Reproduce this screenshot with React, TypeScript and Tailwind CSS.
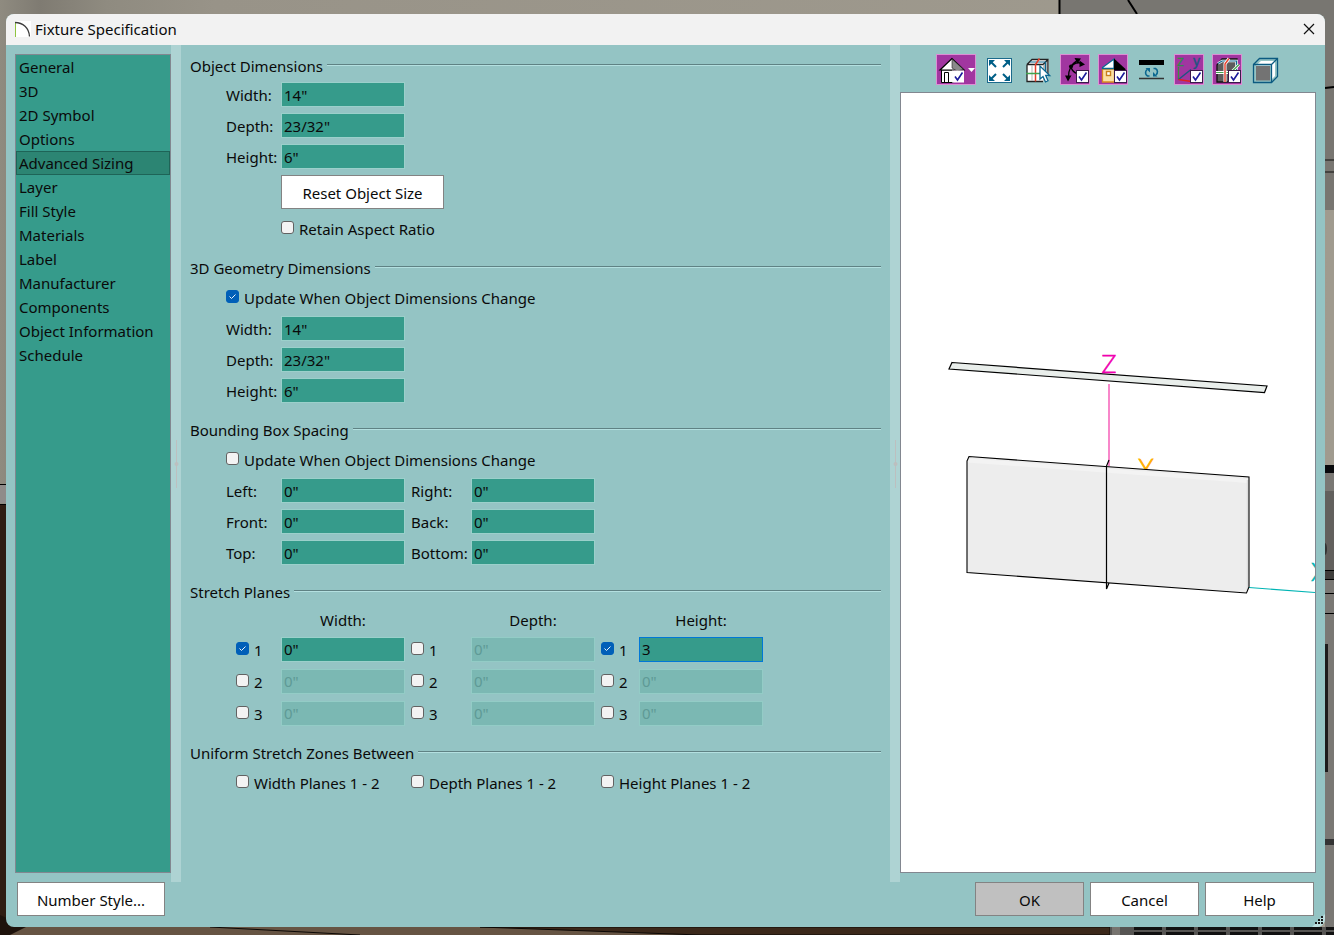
import { useState } from "react";
import type { ReactNode } from "react";

const PAGES = [
  "General",
  "3D",
  "2D Symbol",
  "Options",
  "Advanced Sizing",
  "Layer",
  "Fill Style",
  "Materials",
  "Label",
  "Manufacturer",
  "Components",
  "Object Information",
  "Schedule",
];

function Backdrop() {
  return (
    <svg
      className="absolute inset-0 h-full w-full"
      viewBox="0 0 1334 935"
      preserveAspectRatio="none"
      aria-hidden
    >
      <defs>
        <linearGradient id="wall" x1="0" x2="1" y1="0" y2="0">
          <stop offset="0" stopColor="#8f8b80" />
          <stop offset="0.03" stopColor="#7f7b72" />
          <stop offset="0.08" stopColor="#8f8b80" />
          <stop offset="0.16" stopColor="#989388" />
          <stop offset="1" stopColor="#a09b8f" />
        </linearGradient>
      </defs>
      <rect width="1334" height="935" fill="url(#wall)" />
      <rect x="1060" width="274" height="210" fill="#787671" />
      <path d="M1059.500 0v14M1128 0l9 14M1325 88l9-1" stroke="#000" strokeWidth="2" />
      <path d="M1325 160h9M1325 172h9" stroke="#111" />
      <rect y="485" width="6" height="18" fill="#8f8c8a" />
      <path d="M0 484.500h6M0 504.500h6" stroke="#000" />
      <rect y="505" width="6" height="430" fill="#2f1d12" />
      <rect x="1325" y="465" width="9" height="8" fill="#08090c" />
      <rect x="1325" y="473" width="9" height="462" fill="#7a7874" />
      <rect x="1325" y="491" width="9" height="80" fill="#62605d" />
      <ellipse cx="1325" cy="549" rx="2" ry="6" fill="#333" />
      <path d="M1325 570.500h9M1325 579.500h9M1325 593.500h9M1325 613.500h9" stroke="#000" />
      <rect x="1325" y="571" width="9" height="8" fill="#3f3e3c" />
      <rect x="1325" y="644" width="3" height="128" fill="#1c1b1b" />
      <rect x="1325" y="839" width="9" height="6" fill="#333" />
      <rect y="927" width="1110" height="8" fill="#665443" />
      <path d="M0 935V915l26 12-16 8z" fill="#1e120b" />
      <path d="M210 927l150 8M480 927h630v8H700z" stroke="#0c0805" fill="#3b281a" />
      <rect x="1110" y="927" width="224" height="8" fill="#565553" />
      <rect x="1112" y="927" width="8" height="8" fill="#77746f" />
      <path d="M1134 928.500h200M1134 933.500h200" stroke="#111" strokeWidth="3" strokeDasharray="28 4" />
    </svg>
  );
}

interface GroupProps {
  title: string;
  children: ReactNode;
}

function Group({ title, children }: GroupProps) {
  return (
    <section>
      <div className="flex h-[26px] items-center gap-1">
        <h2>{title}</h2>
        <div className="mb-0.5 h-0.5 flex-1 border-t border-b border-t-[#5f8284] border-b-[#b4e0e0]" />
      </div>
      {children}
    </section>
  );
}

interface CheckProps {
  label: string;
  name?: string;
  checked?: boolean;
}

function Check({ label, name, checked = false }: CheckProps) {
  return (
    <label className="flex items-center gap-[5px] pt-0.5 whitespace-nowrap">
      <span className="relative mb-[3px] block h-[13px] w-[13px] shrink-0">
        <input
          type="checkbox"
          aria-label={name}
          defaultChecked={checked}
          className="peer block h-[13px] w-[13px] appearance-none rounded-[3px] border border-[#626262] bg-[#f3f3f3] checked:border-[#005fb8] checked:bg-[#005fb8]"
        />
        <svg
          className="pointer-events-none absolute inset-0 hidden h-[13px] w-[13px] peer-checked:block"
          viewBox="0 0 13 13"
          fill="none"
          stroke="#e8f2fb"
          aria-hidden
        >
          <path d="M3.500 6.500l2 2 4-4" />
        </svg>
      </span>
      <span>{label}</span>
    </label>
  );
}

interface FieldProps {
  name: string;
  value: string;
  id?: string;
  disabled?: boolean;
  active?: boolean;
}

function Field({ name, value, id, disabled, active }: FieldProps) {
  return (
    <input
      type="text"
      id={id}
      aria-label={name}
      defaultValue={value}
      disabled={disabled}
      className={
        "block h-[25px] w-[124px] border px-0.5 outline-none " +
        (disabled
          ? "border-[#93ccc6] bg-[#7bb8b3] text-[#5f9a96]"
          : active
            ? "border-[#0078d7] bg-[#369b8b]"
            : "border-[#9bd0cb] bg-[#369b8b]")
      }
    />
  );
}

function DimensionRow({ label, value, group }: { label: string; value: string; group: string }) {
  const id = group + "-" + label;
  return (
    <div className="flex h-[31px] items-center pl-9">
      <label htmlFor={id} className="w-[55px]">
        {label}:
      </label>
      <Field id={id} name={group + " " + label} value={value} />
    </div>
  );
}

const SPACING = [
  ["Left", "Right"],
  ["Front", "Back"],
  ["Top", "Bottom"],
];

const AXES = ["Width", "Depth", "Height"];

const PLANES = [
  [
    { on: true, value: '0"' },
    { on: false, value: '0"' },
    { on: true, value: "3", active: true },
  ],
  [
    { on: false, value: '0"' },
    { on: false, value: '0"' },
    { on: false, value: '0"' },
  ],
  [
    { on: false, value: '0"' },
    { on: false, value: '0"' },
    { on: false, value: '0"' },
  ],
];

const CHECK_COLS = ["w-[45px]", "w-[60px]", "w-[38px]"];

function SizingForm() {
  return (
    <form className="flex min-w-0 flex-1 flex-col gap-[11px] pt-2 pr-[9px] pl-[9px]">
      <Group title="Object Dimensions">
        <DimensionRow group="Object" label="Width" value={'14"'} />
        <DimensionRow group="Object" label="Depth" value={'23/32"'} />
        <DimensionRow group="Object" label="Height" value={'6"'} />
        <div className="flex h-10 items-center pl-[91px]">
          <button type="button" className="h-[34px] w-[163px] border border-[#838383] bg-white pt-0.5">
            Reset Object Size
          </button>
        </div>
        <div className="flex h-8 items-center pl-[91px]">
          <Check label="Retain Aspect Ratio" />
        </div>
      </Group>

      <Group title="3D Geometry Dimensions">
        <div className="flex h-8 items-center pl-9">
          <Check label="Update When Object Dimensions Change" checked />
        </div>
        <DimensionRow group="Geometry" label="Width" value={'14"'} />
        <DimensionRow group="Geometry" label="Depth" value={'23/32"'} />
        <DimensionRow group="Geometry" label="Height" value={'6"'} />
      </Group>

      <Group title="Bounding Box Spacing">
        <div className="flex h-8 items-center pl-9">
          <Check label="Update When Object Dimensions Change" />
        </div>
        {SPACING.map(([left, right]) => (
          <div key={left} className="flex h-[31px] items-center pl-9">
            <label htmlFor={left} className="w-[55px]">
              {left}:
            </label>
            <Field id={left} name={left} value={'0"'} />
            <label htmlFor={right} className="ml-1.5 w-[60px]">
              {right}:
            </label>
            <Field id={right} name={right} value={'0"'} />
          </div>
        ))}
      </Group>

      <Group title="Stretch Planes">
        <div className="flex h-7 items-center gap-1.5 pt-0.5 pl-[46px] text-center">
          {AXES.map((axis, a) => (
            <div key={axis} className="flex">
              <span className={CHECK_COLS[a]} />
              <span className="w-[124px]">{axis}:</span>
            </div>
          ))}
        </div>
        {PLANES.map((row, r) => (
          <div key={r} className="flex h-8 items-center gap-1.5 pl-[46px]">
            {row.map((plane, a) => (
              <div key={AXES[a]} className="flex items-center">
                <div className={CHECK_COLS[a]}>
                  <Check label={String(r + 1)} name={AXES[a] + " plane " + (r + 1)} checked={plane.on} />
                </div>
                <Field
                  name={AXES[a] + " plane " + (r + 1) + " position"}
                  value={plane.value}
                  disabled={!plane.on}
                  active={"active" in plane}
                />
              </div>
            ))}
          </div>
        ))}
      </Group>

      <Group title="Uniform Stretch Zones Between">
        <div className="flex h-8 items-center pl-[46px]">
          <div className="w-[175px]">
            <Check label="Width Planes 1 - 2" />
          </div>
          <div className="w-[190px]">
            <Check label="Depth Planes 1 - 2" />
          </div>
          <Check label="Height Planes 1 - 2" />
        </div>
      </Group>
    </form>
  );
}

function Splitter() {
  return (
    <div className="flex w-2.5 shrink-0 items-center justify-center bg-[#aed3d3]">
      <svg className="h-12 w-[5px]" viewBox="0 0 5 48" aria-hidden>
        <path d="M2.500 0v48" stroke="#bdbfbf" />
        <circle cx="2.500" cy="24" r="2" fill="#bdbfbf" />
      </svg>
    </div>
  );
}

function TickBox() {
  return (
    <>
      <rect x="16.500" y="16.500" width="12" height="12" fill="#fff" stroke="#3a1a4a" />
      <path d="M19 22.500l2.500 3.500 5-7.500" fill="none" stroke="#1d1d9c" strokeWidth="1.600" />
    </>
  );
}

interface ToolProps {
  name: string;
  on?: boolean;
  wide?: boolean;
  children: ReactNode;
}

function Tool({ name, on, wide, children }: ToolProps) {
  return (
    <button
      type="button"
      title={name}
      aria-label={name}
      className={
        "h-[31px] shrink-0 " +
        (wide ? "w-10 " : "w-[30px] ") +
        (on ? "bg-[#a136a0] shadow-[inset_0_0_0_1px_#dc8fd4]" : "")
      }
    >
      <svg className="h-[31px] w-full" viewBox={wide ? "0 0 40 31" : "0 0 30 31"} fill="none" aria-hidden>
        {children}
      </svg>
    </button>
  );
}

function Toolbar() {
  return (
    <div className="flex h-[47px] gap-2 pt-[9px] pl-9">
      <Tool name="Render view" on wide>
        <path d="M5.500 16v12.500H17V16z" fill="#fff" stroke="#000" />
        <path d="M16 4.500L4 16h24z" fill="#fff" stroke="#000" strokeWidth="1.200" />
        <path d="M16 5l11.500 10.500L21 17l-5-3z" fill="#8a8a8a" stroke="#222" strokeWidth="0.600" />
        <path d="M8.500 28V18.500h4V28" stroke="#000" />
        <rect x="16" y="16.500" width="12" height="12" fill="#fff" />
        <path d="M19 22.500l2.500 3.500 5-7.500" stroke="#1d1d9c" strokeWidth="1.600" />
        <path d="M32 14h7l-3.500 4z" fill="#fff" />
      </Tool>
      <Tool name="Fill window">
        <rect x="3.500" y="4.500" width="24" height="24" fill="#fff" stroke="#1b6a8c" />
        <g stroke="#005f87" strokeWidth="2">
          <path d="M7 8l5 5M24 8l-5 5M7 25l5-5M24 25l-5-5" />
        </g>
        <path d="M5 6h6l-6 6zM26 6h-6l6 6zM5 27h6l-6-6zM26 27h-6l6-6z" fill="#005f87" />
      </Tool>
      <Tool name="Select object">
        <path d="M5 10.500l5-5h17v16l-6 6H5z" fill="#fff" />
        <path d="M21 10.500l5-5v16l-5 6z" fill="#bbb" />
        <path d="M5 10.500l5-5h16v16M5 10.500h16M5 10.500v17h16M21 10.500l5-5" stroke="#222" strokeWidth="1.300" />
        <path d="M8 8h15.500v15" stroke="#0c6890" strokeWidth="1.200" />
        <path d="M10 11v16" stroke="#b5b5b5" />
        <path d="M17.500 4.500l-4 6v17" stroke="#e6402c" strokeWidth="1.500" />
        <path d="M4 19.500h16" stroke="#3fa34d" strokeWidth="1.300" />
        <path
          d="M18 12v13l3-2.500 2.500 5.500 2.500-1.200-2.300-5.300h4z"
          fill="#fff"
          stroke="#0c6890"
          strokeWidth="1.300"
        />
      </Tool>
      <Tool name="Edit nodes" on>
        <path
          d="M8.500 23c0-7 3-14 9-16.500M11 13c3-4 7-5 11-3.500M11 13c1 4 4 6 7 7"
          stroke="#000"
          strokeWidth="1.300"
        />
        <path d="M8 27.500L5 21.500h6.500zM21 4.500l-6.500-.500 3 5.500zM25 10.500l-5.500-4v6.500z" fill="#000" />
        <circle cx="11" cy="12.500" r="2" fill="#000" />
        <TickBox />
      </Tool>
      <Tool name="Color" on>
        <path d="M4.500 15h12v13h-12z" fill="#fbe0a4" stroke="#d98a1e" strokeWidth="1.300" />
        <path d="M16 5v9.500H4.500v-1z" fill="#fff" stroke="#0c6890" strokeWidth="1.300" />
        <path d="M16 4.500l11.500 10.500V17H16z" fill="#000" />
        <rect x="8.500" y="17.500" width="4" height="4" fill="#fff" stroke="#c9801c" strokeWidth="1.400" />
        <TickBox />
      </Tool>
      <Tool name="Swap planes">
        <rect x="3" y="6" width="25" height="5" fill="#000" />
        <path d="M3 24.500h25" stroke="#333" strokeWidth="1.300" />
        <path d="M13.500 22h-2c-2.500-1.500-2.500-4.500-.500-6.500M17.500 14.500h2c2.500 1.500 2.500 4.500.500 6.500" stroke="#0c6890" strokeWidth="1.600" />
        <path d="M9.500 14h4.500v4.500zM21.500 22.500H17V18z" fill="#0c6890" />
      </Tool>
      <Tool name="Axes" on>
        <path d="M4.500 13v12.500" stroke="#3f8f3f" strokeWidth="1.300" />
        <path d="M4.500 25.500L17 15.500" stroke="#1d5580" strokeWidth="1.500" />
        <path d="M4.500 25.500l13 2" stroke="#e02020" strokeWidth="1.600" />
        <text x="3" y="12" fill="#2f8f45" stroke="#2f8f45" strokeWidth="0.400" className="font-['Liberation_Sans'] text-[11px]">
          Z
        </text>
        <text x="19" y="12" fill="#1d5580" stroke="#1d5580" strokeWidth="0.400" className="font-['Liberation_Sans'] text-[14px]">
          y
        </text>
        <TickBox />
      </Tool>
      <Tool name="Stretch planes" on>
        <path d="M5 11l5-6h15v12l-6 11H5z" fill="#5c5c5c" stroke="#111" strokeWidth="1.300" />
        <path d="M6 9.500l4-2.500h14.500v9" stroke="#fff" strokeWidth="2.600" />
        <path d="M6 9.500l4-2.500h14.500v9" stroke="#0c6890" strokeWidth="1.200" />
        <path d="M4 18.500h15l8-8" stroke="#fff" strokeWidth="2.800" />
        <path d="M4 18.500h15l8-8" stroke="#3fa34d" strokeWidth="1.200" />
        <path d="M17 4.500l-4 5.500v18" stroke="#fff" strokeWidth="3" />
        <path d="M17 4.500l-4 5.500v18" stroke="#e6402c" strokeWidth="1.400" />
        <TickBox />
      </Tool>
      <Tool name="Bounding box">
        <path d="M3.500 10.500l6-6h18v18l-6 6h-18z" fill="#94c4c4" stroke="#0b5a80" strokeWidth="1.300" />
        <path d="M6 11.500l5-4.500h14l-4 4.500zM21 11.500l4-4.500v15l-4 4z" fill="#fff" />
        <path d="M6 12h14v14.500H6z" fill="#737373" />
        <path d="M3.500 10.500h18v18M21.500 10.500l6-6" stroke="#0b5a80" strokeWidth="1.300" />
      </Tool>
    </div>
  );
}

function Preview() {
  return (
    <div className="mr-[9px] mb-[9px] min-h-0 flex-1 overflow-hidden border border-[#828790] bg-white">
      <svg
        className="block h-full w-full"
        viewBox="0 0 414 779"
        preserveAspectRatio="xMidYMid slice"
        fill="none"
        role="img"
        aria-label="3D preview"
      >
        <path d="M51 269.500L366 293l-2.500 6.500L48 276z" fill="#e9eeeb" stroke="#000" strokeWidth="1.200" />
        <g className="font-['Lato'] text-[25px] font-light">
          <text x="208" y="280" textAnchor="middle" fill="#f000b0" stroke="#f000b0" strokeWidth="0.600">
            Z
          </text>
          <text x="245" y="384" textAnchor="middle" fill="#ffae00" stroke="#ffae00" strokeWidth="0.800">
            Y
          </text>
          <text x="410" y="488" fill="#00b4b4" stroke="#00b4b4" strokeWidth="0.600">
            X
          </text>
        </g>
        <path d="M208 291v82" stroke="#f65fb8" strokeWidth="1.500" />
        <path d="M348 494.500l66 5" stroke="#00b4b4" strokeWidth="1.200" />
        <path d="M66 368l2-4.500 280 20.500v110l-2.500 6L66 479.500z" fill="#ededed" />
        <path d="M68 365.500l279 20.500v4L67 369.500z" fill="#f3f3f3" />
        <path d="M346.500 387v110" stroke="#dcdcdc" strokeWidth="1.500" />
        <path d="M66 368l2-4.500 280 20.500v110l-2.500 6L66 479.500z" stroke="#000" strokeWidth="1.100" />
        <path d="M208 367l-2.500 6v123l2.500-6" stroke="#000" strokeWidth="1.200" />
      </svg>
    </div>
  );
}

function PageList() {
  const [current, setCurrent] = useState("Advanced Sizing");

  return (
    <nav className="mt-[9px] mb-[9px] ml-[9px] w-[156px] shrink-0 border border-[#828790] bg-[#369b8b]">
      <ul>
        {PAGES.map((page) => (
          <li key={page}>
            <button
              type="button"
              onClick={() => setCurrent(page)}
              className={
                "flex h-6 w-full items-center border px-0.5 text-left whitespace-nowrap " +
                (page === current ? "border-[#1e6457] bg-[#2c8573]" : "border-transparent")
              }
            >
              {page}
            </button>
          </li>
        ))}
      </ul>
    </nav>
  );
}

const DIALOG_BUTTON = "h-[34px] w-[109px] border border-[#838383] pt-0.5 ";

export default function App() {
  return (
    <div className="relative flex min-h-screen overflow-hidden pt-3.5 pr-[9px] pb-2 pl-1.5 font-['Noto_Sans',sans-serif] text-[15px] leading-5 text-[#0a0a0a]">
      <Backdrop />
      <main className="relative flex flex-1 flex-col overflow-hidden rounded-lg bg-[#94c4c4]">
        <header className="flex h-[31px] items-center bg-[#f2f2f2] pr-2.5 pb-0.5 pl-[9px]">
          <svg className="h-4 w-4" viewBox="0 0 16 16" fill="none" aria-hidden>
            <rect width="16" height="16" fill="#fff" />
            <path d="M0.500 1v15" stroke="#8fc43f" />
            <path d="M0 1.500C8 1.500 14 7 14.500 15.500" stroke="#3c3c3c" strokeWidth="1.300" />
          </svg>
          <h1 className="ml-1 flex-1">Fixture Specification</h1>
          <button type="button" aria-label="Close" className="h-3 w-3">
            <svg className="h-3 w-3" viewBox="0 0 12 12" stroke="#111" strokeWidth="1.200" aria-hidden>
              <path d="M1 1l10 10M11 1L1 11" />
            </svg>
          </button>
        </header>

        <div className="flex min-h-0 flex-1">
          <PageList />
          <Splitter />
          <SizingForm />
          <Splitter />
          <aside className="flex w-[425px] shrink-0 flex-col">
            <Toolbar />
            <Preview />
          </aside>
        </div>

        <footer className="flex gap-1.5 pr-[11px] pb-[11px] pl-[11px]">
          <button type="button" className="mr-auto h-[34px] w-[148px] border border-[#838383] bg-white pt-0.5">
            Number Style...
          </button>
          <button type="button" className={DIALOG_BUTTON + "bg-[#c0c0c0]"}>
            OK
          </button>
          <button type="button" className={DIALOG_BUTTON + "bg-white"}>
            Cancel
          </button>
          <button type="button" className={DIALOG_BUTTON + "bg-white"}>
            Help
          </button>
        </footer>

        <svg className="absolute right-0 bottom-0 h-[13px] w-[13px]" viewBox="0 0 13 13" aria-hidden>
          <path d="M13 0v13H0z" fill="#bde0e0" />
          <path
            d="M9 2h2v2H9zM6 5h2v2H6zM9 5h2v2H9zM3 8h2v2H3zM6 8h2v2H6zM9 8h2v2H9z"
            fill="#1a1a1a"
          />
        </svg>
      </main>
    </div>
  );
}
